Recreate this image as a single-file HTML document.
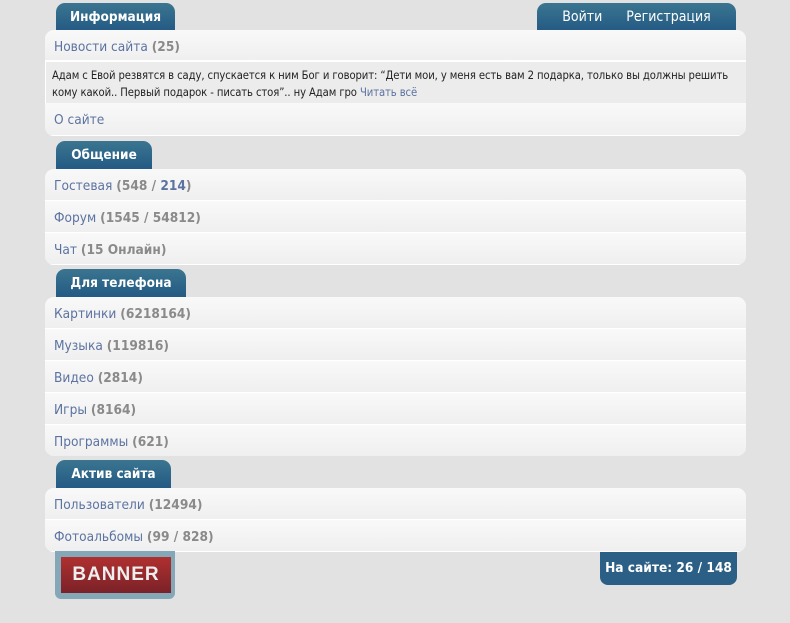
<!DOCTYPE html>
<html><head><meta charset="utf-8"><style>
*{margin:0;padding:0;box-sizing:border-box}
body{width:790px;height:623px;background:#e2e2e2;font-family:"DejaVu Sans Condensed","DejaVu Sans","Liberation Sans",sans-serif;font-size:13.6px;position:relative;overflow:hidden}
.tab{position:absolute;height:28px;background:linear-gradient(#3a7590,#245a84);color:#fff;border-radius:9px 9px 0 0;font-weight:bold;font-size:13.5px;line-height:28px;text-align:center}
.panel{position:absolute;left:45px;width:701px;border-radius:9px;overflow:hidden;background:#f3f3f3}
.row{height:32px;line-height:34px;padding-left:9px;color:#5b73a0;background:linear-gradient(#f9f9f9,#efefef);border-bottom:1px solid #fff}
.row b{color:#8a8a8a}
.news{background:#ececec;border-top:1px solid #fff;border-left:1px solid #fff;padding:5px 4px 4px 6px;font-size:11.2px;line-height:17px;color:#222;height:42px;letter-spacing:-0.1px}
.news a{color:#5b73a0}
</style></head><body>
<div class="tab" style="left:56px;top:3px;width:119px">Информация</div>
<div class="tab" style="left:537px;top:3px;width:199px;font-weight:normal;font-size:14px">Войти&nbsp;&nbsp;&nbsp;&nbsp;&nbsp;&nbsp;Регистрация</div>
<div class="panel" style="top:30px;height:106px">
<div class="row" style="height:31px">Новости сайта <b>(25)</b></div>
<div class="news">Адам с Евой резвятся в саду, спускается к ним Бог и говорит: “Дети мои, у меня есть вам 2 подарка, только вы должны решить<br>кому какой.. Первый подарок - писать стоя”.. ну Адам гро <a>Читать всё</a></div>
<div class="row" style="height:33px">О сайте</div>
</div>
<div class="tab" style="left:56px;top:141px;width:96px">Общение</div>
<div class="panel" style="top:169px;height:96px">
<div class="row">Гостевая <b>(548 / <span style="color:#5b73a0">214</span>)</b></div>
<div class="row">Форум <b>(1545 / 54812)</b></div>
<div class="row">Чат <b>(15 Онлайн)</b></div>
</div>
<div class="tab" style="left:56px;top:269px;width:130px">Для телефона</div>
<div class="panel" style="top:297px;height:159px">
<div class="row">Картинки <b>(6218164)</b></div>
<div class="row">Музыка <b>(119816)</b></div>
<div class="row">Видео <b>(2814)</b></div>
<div class="row">Игры <b>(8164)</b></div>
<div class="row">Программы <b>(621)</b></div>
</div>
<div class="tab" style="left:56px;top:460px;width:115px">Актив сайта</div>
<div class="panel" style="top:488px;height:64px">
<div class="row">Пользователи <b>(12494)</b></div>
<div class="row">Фотоальбомы <b>(99 / 828)</b></div>
</div>
<div style="position:absolute;left:55px;top:551px;width:120px;height:48px;background:#85a8b8;border-radius:0 0 6px 6px"></div>
<div style="position:absolute;left:61px;top:557px;width:110px;height:36px;background:linear-gradient(#b03030,#7a2228);color:#eee;font:bold 19px 'Liberation Sans',sans-serif;line-height:36px;text-align:center;letter-spacing:1px">BANNER</div>
<div style="position:absolute;left:600px;top:552px;width:137px;height:33px;background:#2b5f85;border-radius:0 0 8px 8px;color:#fff;font-weight:bold;line-height:33px;text-align:center">На сайте: 26 / 148</div>
</body></html>
